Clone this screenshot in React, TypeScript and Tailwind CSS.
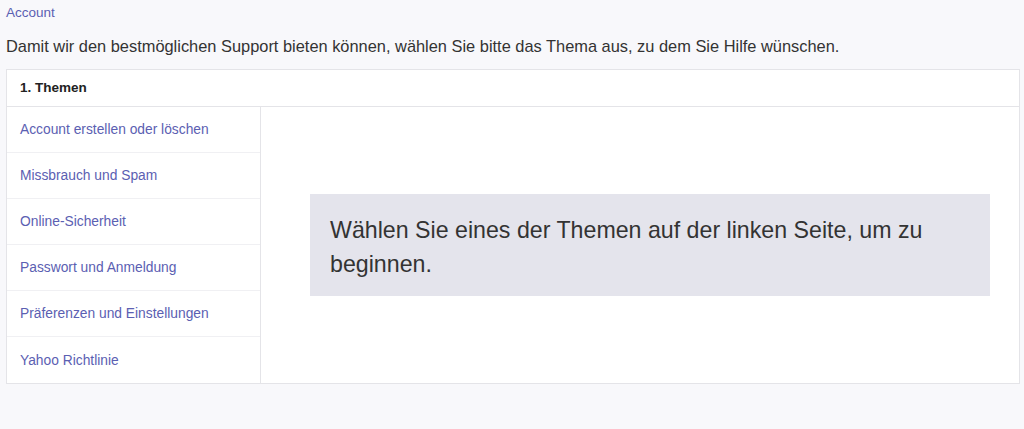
const topics = [
  "Account erstellen oder löschen",
  "Missbrauch und Spam",
  "Online-Sicherheit",
  "Passwort und Anmeldung",
  "Präferenzen und Einstellungen",
  "Yahoo Richtlinie",
];

export default function App() {
  return (
    <div className="w-[1024px] h-[429px] bg-[#f8f8fb] font-['Liberation_Sans',Arial,sans-serif] px-[6px] pt-[4px]">
      <a className="block text-[13.5px] leading-[17px] text-[#5b60b2]">Account</a>
      <p className="mt-[16px] text-[16.4px] leading-[18px] text-[#333]">
        Damit wir den bestmöglichen Support bieten können, wählen Sie bitte das Thema aus, zu dem Sie Hilfe wünschen.
      </p>

      <div className="mt-[14px] w-[1014px] bg-white border border-[#e4e4e8]">
        <div className="h-[37px] flex items-center px-[13px] border-b border-[#e4e4e8]">
          <span className="text-[13.5px] font-bold text-[#222]">1. Themen</span>
        </div>
        <div className="flex">
          <ul className="w-[254px] border-r border-[#e4e4e8]">
            {topics.map((t, i) => (
              <li
                key={t}
                className={
                  "h-[46px] flex items-center px-[13px] pt-[2px] text-[13.8px] text-[#5b60b2] " +
                  (i < topics.length - 1 ? "border-b border-[#f0f0f3]" : "")
                }
              >
                {t}
              </li>
            ))}
          </ul>
          <div className="flex-1 flex items-center pl-[49px] pr-[29px]">
            <div className="w-full h-[102px] bg-[#e4e4ec] px-[20px] pt-[4px] flex items-center">
              <p className="text-[23.2px] leading-[34px] text-[#333]">
                Wählen Sie eines der Themen auf der linken Seite, um zu beginnen.
              </p>
            </div>
          </div>
        </div>
      </div>
    </div>
  );
}
